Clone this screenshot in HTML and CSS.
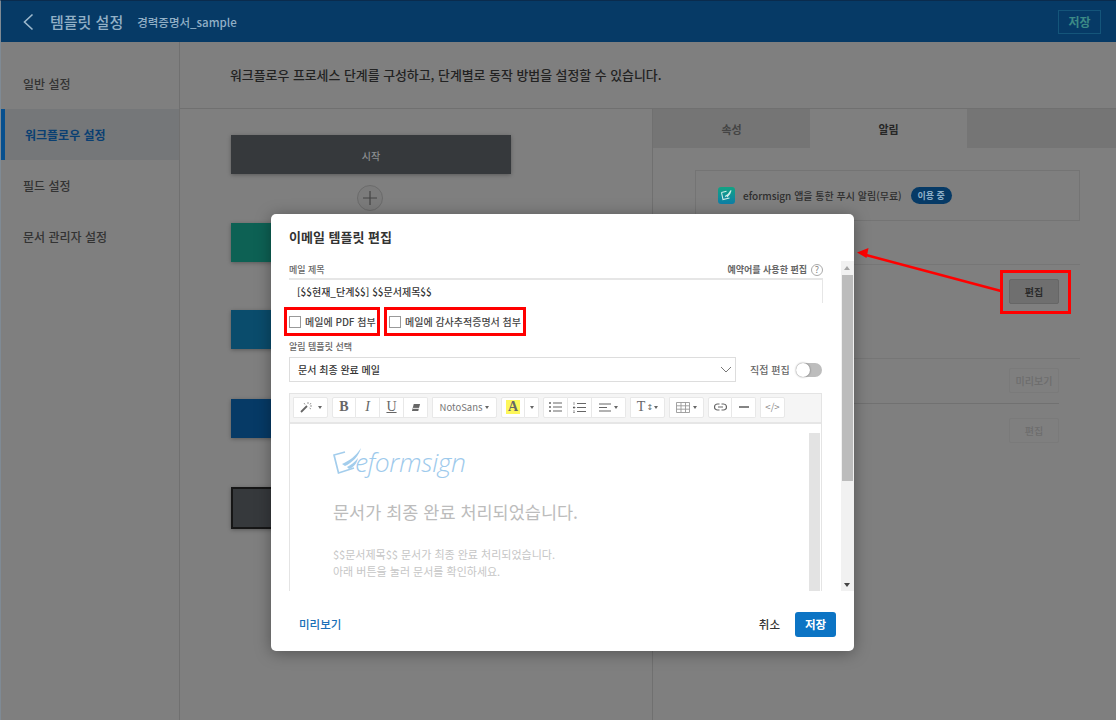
FILE: index.html
```html
<!DOCTYPE html>
<html lang="ko">
<head>
  <meta charset="utf-8" />
  <meta name="viewport" content="width=device-width, initial-scale=1" />
  <title>템플릿 설정</title>
  <link rel="stylesheet" href="styles.css">
</head>
<body>
  <div class="page">
    <header class="topbar">
      <svg class="back" width="12" height="18" viewBox="0 0 12 18"><path d="M10.5 1.5 2.5 9l8 7.5" fill="none" stroke="#9db8cc" stroke-width="1.6"/></svg>
      <h1>템플릿 설정</h1>
      <span class="doc-name">경력증명서_sample</span>
      <button class="top-save">저장</button>
    </header>

    <div class="main">
      <nav class="side">
        <a class="side-item">일반 설정</a>
        <a class="side-item active">워크플로우 설정</a>
        <a class="side-item">필드 설정</a>
        <a class="side-item">문서 관리자 설정</a>
      </nav>

      <div class="content">
        <p class="intro">워크플로우 프로세스 단계를 구성하고, 단계별로 동작 방법을 설정할 수 있습니다.</p>
        <div class="split">
          <section class="flow">
            <div class="node node-start">시작</div>
            <div class="plus"><svg width="14" height="14" viewBox="0 0 14 14"><path d="M7 0v14M0 7h14" stroke="#444" stroke-width="1.2"/></svg></div>
            <div class="node node-green"></div>
            <div class="node node-teal"></div>
            <div class="node node-blue"></div>
            <div class="node node-end"></div>
          </section>

          <section class="panel">
            <div class="tabs">
              <div class="tab">속성</div>
              <div class="tab current">알림</div>
              <div class="tab-rest"></div>
            </div>
            <div class="push-box">
              <svg class="app-icon" width="17" height="17" viewBox="0 0 17 17">
                <defs><linearGradient id="app" x1="0" y1="0" x2="0" y2="1"><stop offset="0" stop-color="#12a383"/><stop offset="1" stop-color="#0e7fa8"/></linearGradient></defs>
                <rect width="17" height="17" rx="3" fill="url(#app)"/>
                <path d="M3.500 5.500l5-1.200M3.500 5.500l1.500 7 6.500-1.500M7 9.500c2.500-1 4.500-3 6-6-.5 3-2 5-4 6.500" fill="none" stroke="#cfeee8" stroke-width="1.100"/>
              </svg>
              <span>eformsign 앱을 통한 푸시 알림(무료)</span>
              <em class="badge">이용 중</em>
            </div>
            <div class="rows">
              <div class="row row-first"><button class="ghost strong">편집</button></div>
              <div class="row row-second"><button class="ghost">미리보기</button></div>
              <div class="row row-third"><button class="ghost">편집</button></div>
            </div>
          </section>
        </div>
      </div>
    </div>

    <svg class="callout" width="1116" height="720" viewBox="0 0 1116 720">
      <rect x="1001.5" y="271.5" width="68" height="41" fill="none" stroke="#f00" stroke-width="3"/>
      <path d="M1001 291 866 255" stroke="#f00" stroke-width="2.5"/>
      <path d="M857 252.5l11.500-4.500-2 10z" fill="#f00"/>
    </svg>

    <div class="modal">
      <h2>이메일 템플릿 편집</h2>
      <div class="modal-body">
        <div class="form">
          <div class="label-row">
            <label>메일 제목</label>
            <span class="hint">예약어를 사용한 편집 <i class="help">?</i></span>
          </div>
          <div class="subject">[$$현재_단계$$] $$문서제목$$</div>
          <div class="checks">
            <label class="check mark-a"><span class="box"></span>메일에 PDF 첨부</label>
            <label class="check mark-b"><span class="box"></span>메일에 감사추적증명서 첨부</label>
          </div>
          <label class="tpl-label">알림 템플릿 선택</label>
          <div class="select-row">
            <div class="select">
              <span>문서 최종 완료 메일</span>
              <svg width="12" height="7" viewBox="0 0 12 7"><path d="M1 1l5 5 5-5" fill="none" stroke="#777" stroke-width="1"/></svg>
            </div>
            <span class="direct">직접 편집</span>
            <span class="toggle"><span class="knob"></span></span>
          </div>

          <div class="editor">
            <div class="toolbar">
              <div class="group"><button class="tool w35">
                <svg width="15" height="12" viewBox="0 0 15 12"><path d="M1 11 7 5" stroke="#666" stroke-width="1.800"/><path d="M8 1v2M11 2l-1 1.500M12 5h-2M4 2l1 1.500M11 8 9.500 7" stroke="#999"/></svg><b class="caret"></b></button></div>
              <div class="group">
                <button class="tool w24 serif"><b>B</b></button>
                <button class="tool w24 serif"><i>I</i></button>
                <button class="tool w24 serif"><u>U</u></button>
                <button class="tool w24"><svg width="10" height="9" viewBox="0 0 11 10"><path d="M3 1h7L8 9H1z" fill="#666"/><path d="M2 6h7" stroke="#f5f5f5"/></svg></button>
              </div>
              <div class="group"><button class="tool w65 font-btn">NotoSans<b class="caret"></b></button></div>
              <div class="group">
                <button class="tool w24 serif"><b class="hilite">A</b></button>
                <button class="tool w14"><b class="caret"></b></button>
              </div>
              <div class="group">
                <button class="tool w25"><svg width="13" height="10" viewBox="0 0 13 10"><path d="M4 1h9M4 5h9M4 9h9" stroke="#666" stroke-width="1.100"/><path d="M0 1h2M0 5h2M0 9h2" stroke="#666" stroke-width="1.400"/></svg></button>
                <button class="tool w24"><svg width="13" height="11" viewBox="0 0 13 11"><path d="M4 1.500h9M4 5.500h9M4 9.500h9" stroke="#666" stroke-width="1.100"/><path d="M1 0v3M0 5h2v1H0M0 9h2M0 10.500h2" stroke="#888" stroke-width=".8"/></svg></button>
                <button class="tool w34"><svg width="12" height="9" viewBox="0 0 12 9"><path d="M0 1h12M0 4.500h8M0 8h12" stroke="#666" stroke-width="1.100"/></svg><b class="caret"></b></button>
              </div>
              <div class="group"><button class="tool w35 serif t-size">T<span class="arrows">↕</span><b class="caret"></b></button></div>
              <div class="group"><button class="tool w35"><svg width="14" height="11" viewBox="0 0 14 11"><path d="M.5.500h13v10H.5zM.5 3.800h13M.5 7.200h13M5 .500v10M9.500 .500v10" fill="none" stroke="#999" stroke-width=".9"/></svg><b class="caret"></b></button></div>
              <div class="group">
                <button class="tool w24"><svg width="13" height="8" viewBox="0 0 13 8"><path d="M5.500 1H3.500a3 3 0 0 0 0 6h2M7.500 1h2a3 3 0 0 1 0 6h-2M4 4h5" fill="none" stroke="#666" stroke-width="1.200"/></svg></button>
                <button class="tool w24"><svg width="10" height="2" viewBox="0 0 10 2"><path d="M0 1h10" stroke="#666" stroke-width="1.600"/></svg></button>
              </div>
              <div class="group"><button class="tool w25 code">&lt;/&gt;</button></div>
            </div>

            <div class="sheet">
              <div class="mail">
                <div class="logo">
                  <svg width="30" height="28" viewBox="0 0 30 28"><path d="M12 5 1 8l4.500 18L21 21" fill="none" stroke="#a3cdec" stroke-width="1.700"/><path d="M9 17C16 14 23 9 28 1 26 9 19 16 12 19zM14 20c4-2 8-5 11-9-1 5-4 9-9 11z" fill="#a3cdec"/></svg>
                  <span>eformsign</span>
                </div>
                <h3>문서가 최종 완료 처리되었습니다.</h3>
                <p>$$문서제목$$ 문서가 최종 완료 처리되었습니다.<br>아래 버튼을 눌러 문서를 확인하세요.</p>
              </div>
              <div class="scroll inner"><span class="up"></span><span class="track"></span></div>
            </div>
          </div>
        </div>
        <div class="scroll outer">
          <span class="up"></span>
          <span class="thumb"></span>
          <span class="rail"></span>
          <span class="down"></span>
        </div>
      </div>
      <footer class="modal-foot">
        <a class="preview">미리보기</a>
        <a class="cancel">취소</a>
        <button class="save">저장</button>
      </footer>
    </div>
  </div>
</body>
</html>
```

FILE: styles.css
```css
* { box-sizing: border-box; }
html, body { margin: 0; padding: 0; }
body { font-family: "Noto Sans CJK KR", "Noto Sans", sans-serif; background: #7f7f7f; color: #2c2c2c; }
button { font-family: inherit; padding: 0; }

.page {
  position: relative; width: 1116px; height: 720px; overflow: hidden;
  display: flex; flex-direction: column;
  background: #7f7f7f;
}

/* top bar */
.topbar {
  height: 42px; flex: none; display: flex; align-items: center;
  background: #063a66; border-top: 1px solid #0a2b4d; border-left: 1px solid #7f8a94;
  padding-left: 21px; color: #92b0c6;
}
.back { margin-right: 16px; }
.topbar h1 { margin: 0 14px 0 0; font-size: 15px; font-weight: 500; line-height: 1; }
.doc-name { font-size: 11.500px; font-weight: 500; }
.top-save {
  margin-left: auto; margin-right: 15px; width: 43px; height: 24px;
  background: transparent; border: 1px solid #14557a; color: #3c8a86;
  font-size: 12px; font-weight: 700;
}

.main { flex: 1; display: flex; min-height: 0; }

/* left menu */
.side {
  width: 180px; flex: none; padding: 16px 0 0 1px;
  border-right: 1px solid #707070;
  background: linear-gradient(#7f8a94, #7f8a94) left top / 1px 100% no-repeat;
}
.side-item {
  display: flex; align-items: center; height: 51px; padding-left: 22px;
  font-size: 12px; font-weight: 500; color: #333;
}
.side-item.active {
  background: #757779; border-left: 4px solid #064f8e; padding-left: 20px;
  color: #0a3f72; font-weight: 700;
}

.content { flex: 1; display: flex; flex-direction: column; min-width: 0; }
.intro {
  margin: 0; height: 67px; flex: none; padding: 0 0 1px 50px;
  display: flex; align-items: center;
  font-size: 12.900px; font-weight: 500; color: #222;
  border-bottom: 1px solid #707070;
}
.split { flex: 1; display: flex; min-height: 0; }

/* workflow */
.flow { width: 472px; flex: none; padding: 26px 0 0 51px; }
.node { width: 280px; height: 39px; box-shadow: 0 1px 4px rgba(0, 0, 0, .3); }
.node-start { background: #36393c; color: #8b8d8f; font-size: 10px; font-weight: 500; display: flex; align-items: center; justify-content: center; padding-top: 2px; }
.plus {
  width: 26px; height: 26px; margin: 11px 0 12px 126px;
  border: 1px solid #6b6b6b; border-radius: 50%; background: #7b7b7b;
  display: flex; align-items: center; justify-content: center;
}
.node-green { background: #0d6154; }
.node-teal { background: #0a4c6c; margin-top: 48px; }
.node-blue { background: #063a66; margin-top: 50px; }
.node-end { background: #36393c; border: 2px solid #161616; height: 42px; margin-top: 49px; }

/* right panel */
.panel { flex: 1; border-left: 1px solid #707070; min-width: 0; }
.tabs { display: flex; height: 39px; }
.tab { width: 157px; display: flex; align-items: center; justify-content: center; background: #757575; font-size: 11px; font-weight: 700; color: #444; }
.tab.current { background: #7f7f7f; color: #262626; }
.tab-rest { flex: 1; background: #757575; }
.push-box {
  margin: 22px 36px 0 42px; height: 51px; padding-left: 22px;
  display: flex; align-items: center;
  border: 1px solid #747474; font-size: 10px; font-weight: 500; color: #2e2e2e;
}
.app-icon { margin-right: 8px; }
.badge {
  margin-left: 9px; width: 41px; height: 17px; border-radius: 9px;
  background: #063a66; color: #8fb0c8; font-size: 9px; font-style: normal; font-weight: 700;
  display: flex; align-items: center; justify-content: center;
}
.rows { margin-right: 36px; padding-top: 43px; }
.row { display: flex; justify-content: flex-end; padding-right: 21px; border-top: 1px solid #767676; }
.row-first { height: 94px; padding-top: 14px; }
.row-second { height: 45px; padding-top: 9px; }
.row-third { padding-top: 14px; border-top-color: #717171; margin-right: 21px; padding-right: 0; }
.ghost {
  width: 50px; height: 25px; background: transparent; border: 1px solid #7a7a7a; border-radius: 2px;
  color: #6d6d6d; font-size: 10px; font-weight: 500;
}
.ghost.strong { background: #6f6f6f; border-color: #666; color: #2c2c2c; font-weight: 700; }

/* annotation */
.callout { position: absolute; left: 0; top: 0; pointer-events: none; }

/* dialog */
.modal {
  position: absolute; left: 271px; top: 214px; width: 583px; height: 437px;
  background: #fff; border-radius: 5px; box-shadow: 0 2px 16px rgba(0, 0, 0, .35);
  display: flex; flex-direction: column;
}
.modal h2 { margin: 0; height: 47px; padding: 13px 0 0 18px; font-size: 13px; line-height: 20px; font-weight: 700; color: #333; }
.modal-body { height: 330px; display: flex; overflow: hidden; flex: none; }
.form { width: 570px; flex: none; padding-left: 13px; overflow: hidden; }

.label-row { display: flex; justify-content: space-between; align-items: center; height: 17px; padding: 0 18px 0 5px; margin-top: 0; }
.label-row label, .tpl-label { font-size: 9px; font-weight: 500; color: #666; }
.hint { font-size: 9px; font-weight: 700; color: #666; display: flex; align-items: center; gap: 4px; }
.help { width: 12px; height: 12px; border: 1px solid #aaa; border-radius: 50%; font-size: 9px; font-style: normal; font-weight: 400; color: #888; display: flex; align-items: center; justify-content: center; }
.subject {
  margin: 0 18px 0 5px; height: 25px; padding: 3px 0 0 8px;
  border-top: 2px solid #e6e6e6; border-right: 1px solid #e6e6e6;
  font-size: 10px; line-height: 17px; font-weight: 500; color: #333;
}
.checks { display: flex; gap: 4px; height: 29px; margin-top: 4px; }
.check {
  height: 29px; display: flex; align-items: center;
  border: 3px solid #f00; padding-left: 2px;
  font-size: 10px; font-weight: 500; color: #444; white-space: nowrap;
}
.mark-a { width: 96px; }
.mark-b { width: 142px; }
.box { width: 12px; height: 12px; border: 1px solid #999; margin-right: 4px; flex: none; }
.tpl-label { display: block; height: 21px; padding: 4px 0 0 5px; line-height: 13px; }
.select-row { display: flex; align-items: center; padding-left: 5px; height: 25px; }
.select {
  width: 447px; height: 25px; padding: 0 3px 0 8px;
  border: 1px solid #ddd; display: flex; align-items: center; justify-content: space-between;
  font-size: 10px; font-weight: 500; color: #333;
}
.direct { margin-left: 14px; margin-right: 6px; font-size: 10px; font-weight: 500; color: #666; white-space: nowrap; }
.toggle { width: 26px; height: 14px; border-radius: 7px; background: #bdbdbd; position: relative; display: block; }
.knob { position: absolute; left: 0; top: 0; width: 14px; height: 14px; border-radius: 50%; background: #fff; box-shadow: 0 0 2px rgba(0, 0, 0, .5); }

/* editor */
.editor { margin: 11px 18px 0 5px; border: 1px solid #e4e4e4; border-bottom: 0; width: 533px; }
.toolbar { height: 30px; background: #f5f5f5; border-bottom: 2px solid #e6e6e6; display: flex; align-items: center; gap: 4px; padding: 0 0 2px 3px; }
.group { display: flex; }
.tool {
  height: 21px; background: #fff; border: 1px solid #e8e8e8; border-left-width: 0;
  display: flex; align-items: center; justify-content: center; gap: 3px;
  font-size: 11px; color: #666;
}
.tool:first-child { border-left-width: 1px; border-radius: 2px 0 0 2px; }
.tool:last-child { border-radius: 0 2px 2px 0; }
.w14 { width: 14px; }
.w24 { width: 24px; }
.w25 { width: 25px; }
.w34 { width: 34px; }
.w35 { width: 35px; }
.w65 { width: 65px; }
.serif { font-family: "Liberation Serif", serif; font-size: 14px; color: #666; }
.font-btn { font-size: 9.500px; color: #777; }
.hilite { background: #fdf75a; padding: 0 2px; line-height: 14px; color: #666; }
.caret { width: 0; height: 0; border: 2px solid transparent; border-top: 3px solid #666; border-bottom: 0; }
.t-size { gap: 1px; }
.arrows { font-size: 8px; font-family: "DejaVu Sans", sans-serif; }
.code { font-size: 9.500px; color: #888; }

.sheet { height: 168px; display: flex; overflow: hidden; background: #fff; }
.mail { flex: 1; padding: 22px 0 0 43px; min-width: 0; }
.logo { display: flex; align-items: center; height: 32px; }
.logo svg { flex: none; margin-right: -8px; margin-top: -3px; }
.logo span { font-family: "Open Sans", sans-serif; font-style: italic; font-weight: 300; font-size: 26.500px; color: #9ecaec; line-height: 32px; letter-spacing: -.4px; }
.mail h3 { margin: 21px 0 0; font-size: 17.500px; line-height: 26px; font-weight: 400; color: #bcbcbc; }
.mail p { margin: 21px 0 0; font-size: 11px; line-height: 17px; color: #c6c6c6; }

.scroll { display: flex; flex-direction: column; flex: none; background: #f1f1f1; }
.inner { width: 11px; margin-right: 1px; background: #fff; }
.inner .up { height: 9px; background: #fff; }
.inner .track { flex: 1; background: #e3e3e3; }
.outer { width: 13px; }
.outer .up { height: 14px; position: relative; }
.outer .up::after { content: ""; position: absolute; left: 3px; top: 5px; border: 3px solid transparent; border-top: 0; border-bottom: 4px solid #a5a5a5; }
.outer .thumb { height: 206px; background: #bcbcbc; margin: 0 1px; }
.outer .rail { flex: 1; }
.outer .down { height: 12px; position: relative; }
.outer .down::after { content: ""; position: absolute; left: 3px; top: 4px; border: 3px solid transparent; border-bottom: 0; border-top: 4px solid #444; }

.modal-foot { flex: 1; display: flex; align-items: center; padding: 6px 18px 0 28px; }
.preview { font-size: 11.500px; font-weight: 500; color: #1a6fb8; }
.cancel { margin-left: auto; margin-right: 15px; font-size: 11.500px; font-weight: 500; color: #333; }
.save { width: 41px; height: 25px; border: 0; border-radius: 3px; background: #0c74c4; color: #fff; font-size: 11.500px; font-weight: 700; }
```
